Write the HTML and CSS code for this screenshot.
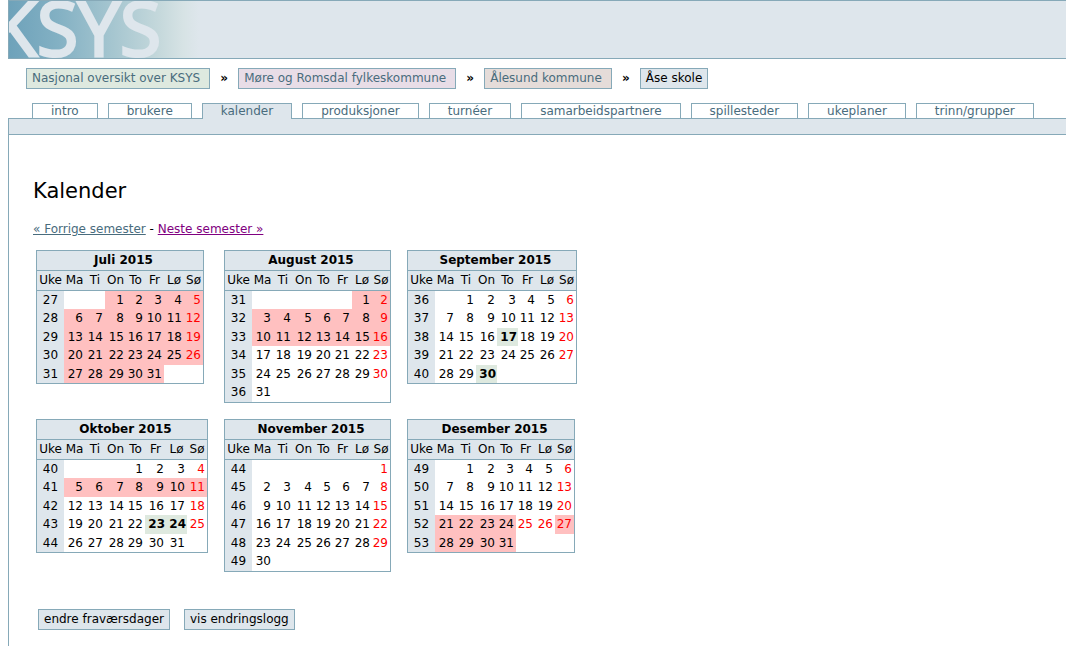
FILE: index.html
```html
<!DOCTYPE html>
<html lang="no">
<head>
<meta charset="utf-8">
<title>KSYS - Kalender</title>
<link rel="stylesheet" href="styles.css">
</head>
<body>
<header class="banner">
  <svg class="logo" width="190" height="57" viewBox="0 0 190 57" role="img" aria-label="KSYS">
    <defs>
      <linearGradient id="fade" x1="0" y1="0" x2="1" y2="0">
        <stop offset="0" stop-color="#6ea2ba"/>
        <stop offset="0.25" stop-color="#82b0c3"/>
        <stop offset="0.55" stop-color="#a6c6d0"/>
        <stop offset="0.8" stop-color="#c6d9dc"/>
        <stop offset="0.92" stop-color="#d7e3e5"/>
        <stop offset="1" stop-color="#dee6ec"/>
      </linearGradient>
    </defs>
    <rect width="190" height="57" fill="url(#fade)"/>
    <text class="logo-text" x="-18" y="55">KSYS</text>
  </svg>
</header>
<nav class="crumbs" aria-label="Sti">
  <a class="crumb green" href="#">Nasjonal oversikt over KSYS</a><span class="sep">»</span>
  <a class="crumb pink" href="#">Møre og Romsdal fylkeskommune</a><span class="sep">»</span>
  <a class="crumb sand" href="#">Ålesund kommune</a><span class="sep">»</span>
  <a class="crumb current" href="#">Åse skole</a>
</nav>
<nav class="tabs" aria-label="Hovedmeny">
  <a class="tab" href="#">intro</a>
  <a class="tab" href="#">brukere</a>
  <a class="tab active" href="#">kalender</a>
  <a class="tab" href="#">produksjoner</a>
  <a class="tab" href="#">turnéer</a>
  <a class="tab" href="#">samarbeidspartnere</a>
  <a class="tab" href="#">spillesteder</a>
  <a class="tab" href="#">ukeplaner</a>
  <a class="tab" href="#">trinn/grupper</a>
</nav>
<div class="strip"></div>
<main class="content">
  <h1>Kalender</h1>
  <p class="semesters"><a href="#">« Forrige semester</a> - <a class="visited" href="#">Neste semester »</a></p>
  <div class="months" id="months"></div>
  <div class="actions">
    <button type="button">endre fraværsdager</button>
    <button type="button">vis endringslogg</button>
  </div>
</main>
<script src="calendar.js"></script>
</body>
</html>
```
FILE: styles.css
```css
body {
  margin: 0 0 0 8px;
  min-height: 100vh;
  display: flex;
  flex-direction: column;
  background: #fff;
  color: #000;
  font: 12px/15px Verdana, "DejaVu Sans", sans-serif;
}
a { color: #496c7d; }
.banner {
  display: flex;
  border: 1px solid #86a9b8;
  border-right: 0;
  background: #dee6ec;
}
.logo { display: block; overflow: hidden; }
.logo-text {
  font-family: "Open Sans", sans-serif;
  font-size: 75px;
  fill: #dee6ec;
  stroke: #dee6ec;
  stroke-width: 3px;
}
.crumbs {
  display: flex;
  align-items: center;
  padding: 9px 0 0 18px;
  white-space: nowrap;
}
.crumb {
  border: 1px solid #86a9b8;
  padding: 2px 9px 2px 5px;
  text-decoration: none;
}
.green { background: #dee9df; }
.pink { background: #e8dde7; }
.sand { background: #e5dcd9; }
.current { background: #dee6ec; color: #000; padding-right: 5px; }
.sep {
  width: 28px;
  text-align: center;
  font-weight: bold;
}
.tabs {
  display: flex;
  gap: 10px;
  padding: 14px 0 0 24px;
  white-space: nowrap;
}
.tab {
  height: 14px;
  padding: 0 18px;
  border: 1px solid #86a9b8;
  border-bottom: 0;
  text-decoration: none;
}
.active {
  position: relative;
  margin-bottom: -1px;
  height: 15px;
  background: #dee6ec;
}
.strip {
  height: 15px;
  border: 1px solid #86a9b8;
  border-right: 0;
  background: #dee6ec;
}
.content {
  flex: 1;
  padding: 43px 0 16px 24px;
  border-left: 1px solid #86a9b8;
}
h1 {
  margin: 0 0 18px;
  font-size: 21px;
  font-weight: normal;
  line-height: 26px;
}
.semesters { margin: 0; }
.visited { color: #800080; }
.months {
  display: grid;
  grid-template-columns: repeat(3, auto);
  justify-content: start;
  align-items: start;
  justify-items: start;
  gap: 16px;
  margin: 13px 0 0 3px;
}
.month {
  display: flex;
  border: 1px solid #86a9b8;
}
.month table {
  table-layout: fixed;
  width: 0;
  border-collapse: separate;
  border-spacing: 0;
}
.month caption {
  height: 19px;
  padding-left: 7px;
  line-height: 19px;
  font-weight: bold;
  background: #dee6ec;
  border-bottom: 1px solid #86a9b8;
}
.w18 { width: 18px; }
.w19 { width: 19px; }
.w20 { width: 20px; }
.w21 { width: 21px; }
.w27 { width: 27px; }
.month th, .month td {
  height: 18px;
  padding: 0 2px 0 0;
  line-height: 18px;
  text-align: right;
  white-space: nowrap;
}
.month tbody tr:nth-child(even) > * { height: 19px; line-height: 19px; }
.month tbody th, .month thead th {
  padding: 0;
  text-align: center;
  font-weight: normal;
  background: #dee6ec;
}
.month thead th {
  height: 19px;
  line-height: 19px;
  border-bottom: 1px solid #86a9b8;
}
.month .off { background: #ffc0c0; }
.month .red { color: #f00; }
.month .show { background: #dee9df; font-weight: bold; padding-right: 1px; }
.actions {
  display: flex;
  gap: 14px;
  margin: 37px 0 0 5px;
}
button {
  padding: 2px 5px;
  border: 1px solid #86a9b8;
  border-radius: 0;
  background: #dee6ec;
  color: #000;
  font: inherit;
}
```
FILE: calendar.js
```js
const dayNames = ["Uke", "Ma", "Ti", "On", "To", "Fr", "Lø", "Sø"];
const range = (a, b) => Array.from({ length: b - a + 1 }, (_, i) => a + i);

// start: column of the 1st (0 = Monday)
const months = [
  { name: "Juli 2015", week: 27, start: 2, days: 31, off: range(1, 31), cols: [27, 21, 20, 21, 19, 19, 20, 19] },
  { name: "August 2015", week: 31, start: 5, days: 31, off: range(1, 16), cols: [27, 21, 20, 21, 19, 19, 20, 18] },
  { name: "September 2015", week: 36, start: 1, days: 30, show: [17, 30], cols: [27, 21, 20, 21, 21, 19, 20, 19] },
  { name: "Oktober 2015", week: 40, start: 3, days: 31, off: range(5, 11), show: [23, 24], cols: [27, 21, 20, 21, 19, 21, 21, 20] },
  { name: "November 2015", week: 44, start: 6, days: 30, cols: [27, 21, 20, 21, 19, 19, 20, 18] },
  { name: "Desember 2015", week: 49, start: 1, days: 31, off: [21, 22, 23, 24, 27, 28, 29, 30, 31], red: [25, 26], cols: [27, 21, 20, 21, 19, 19, 20, 19] }
];

function monthTable(m) {
  const cols = m.cols.map(w => `<col class="w${w}">`).join("");
  const head = dayNames.map(d => `<th scope="col">${d}</th>`).join("");
  let rows = "";
  for (let r = 0; r * 7 - m.start < m.days; r++) {
    rows += `<tr><th scope="row">${m.week + r}</th>`;
    for (let c = 0; c < 7; c++) {
      const day = r * 7 + c - m.start + 1;
      if (day < 1 || day > m.days) { rows += "<td></td>"; continue; }
      const cls = [];
      if ((m.off || []).includes(day)) cls.push("off");
      if ((m.show || []).includes(day)) cls.push("show");
      if (c === 6 || (m.red || []).includes(day)) cls.push("red");
      rows += `<td class="${cls.join(" ")}">${day}</td>`;
    }
    rows += "</tr>";
  }
  return `<div class="month"><table><caption>${m.name}</caption><colgroup>${cols}</colgroup><thead><tr>${head}</tr></thead><tbody>${rows}</tbody></table></div>`;
}

document.getElementById("months").innerHTML = months.map(monthTable).join("");
```
